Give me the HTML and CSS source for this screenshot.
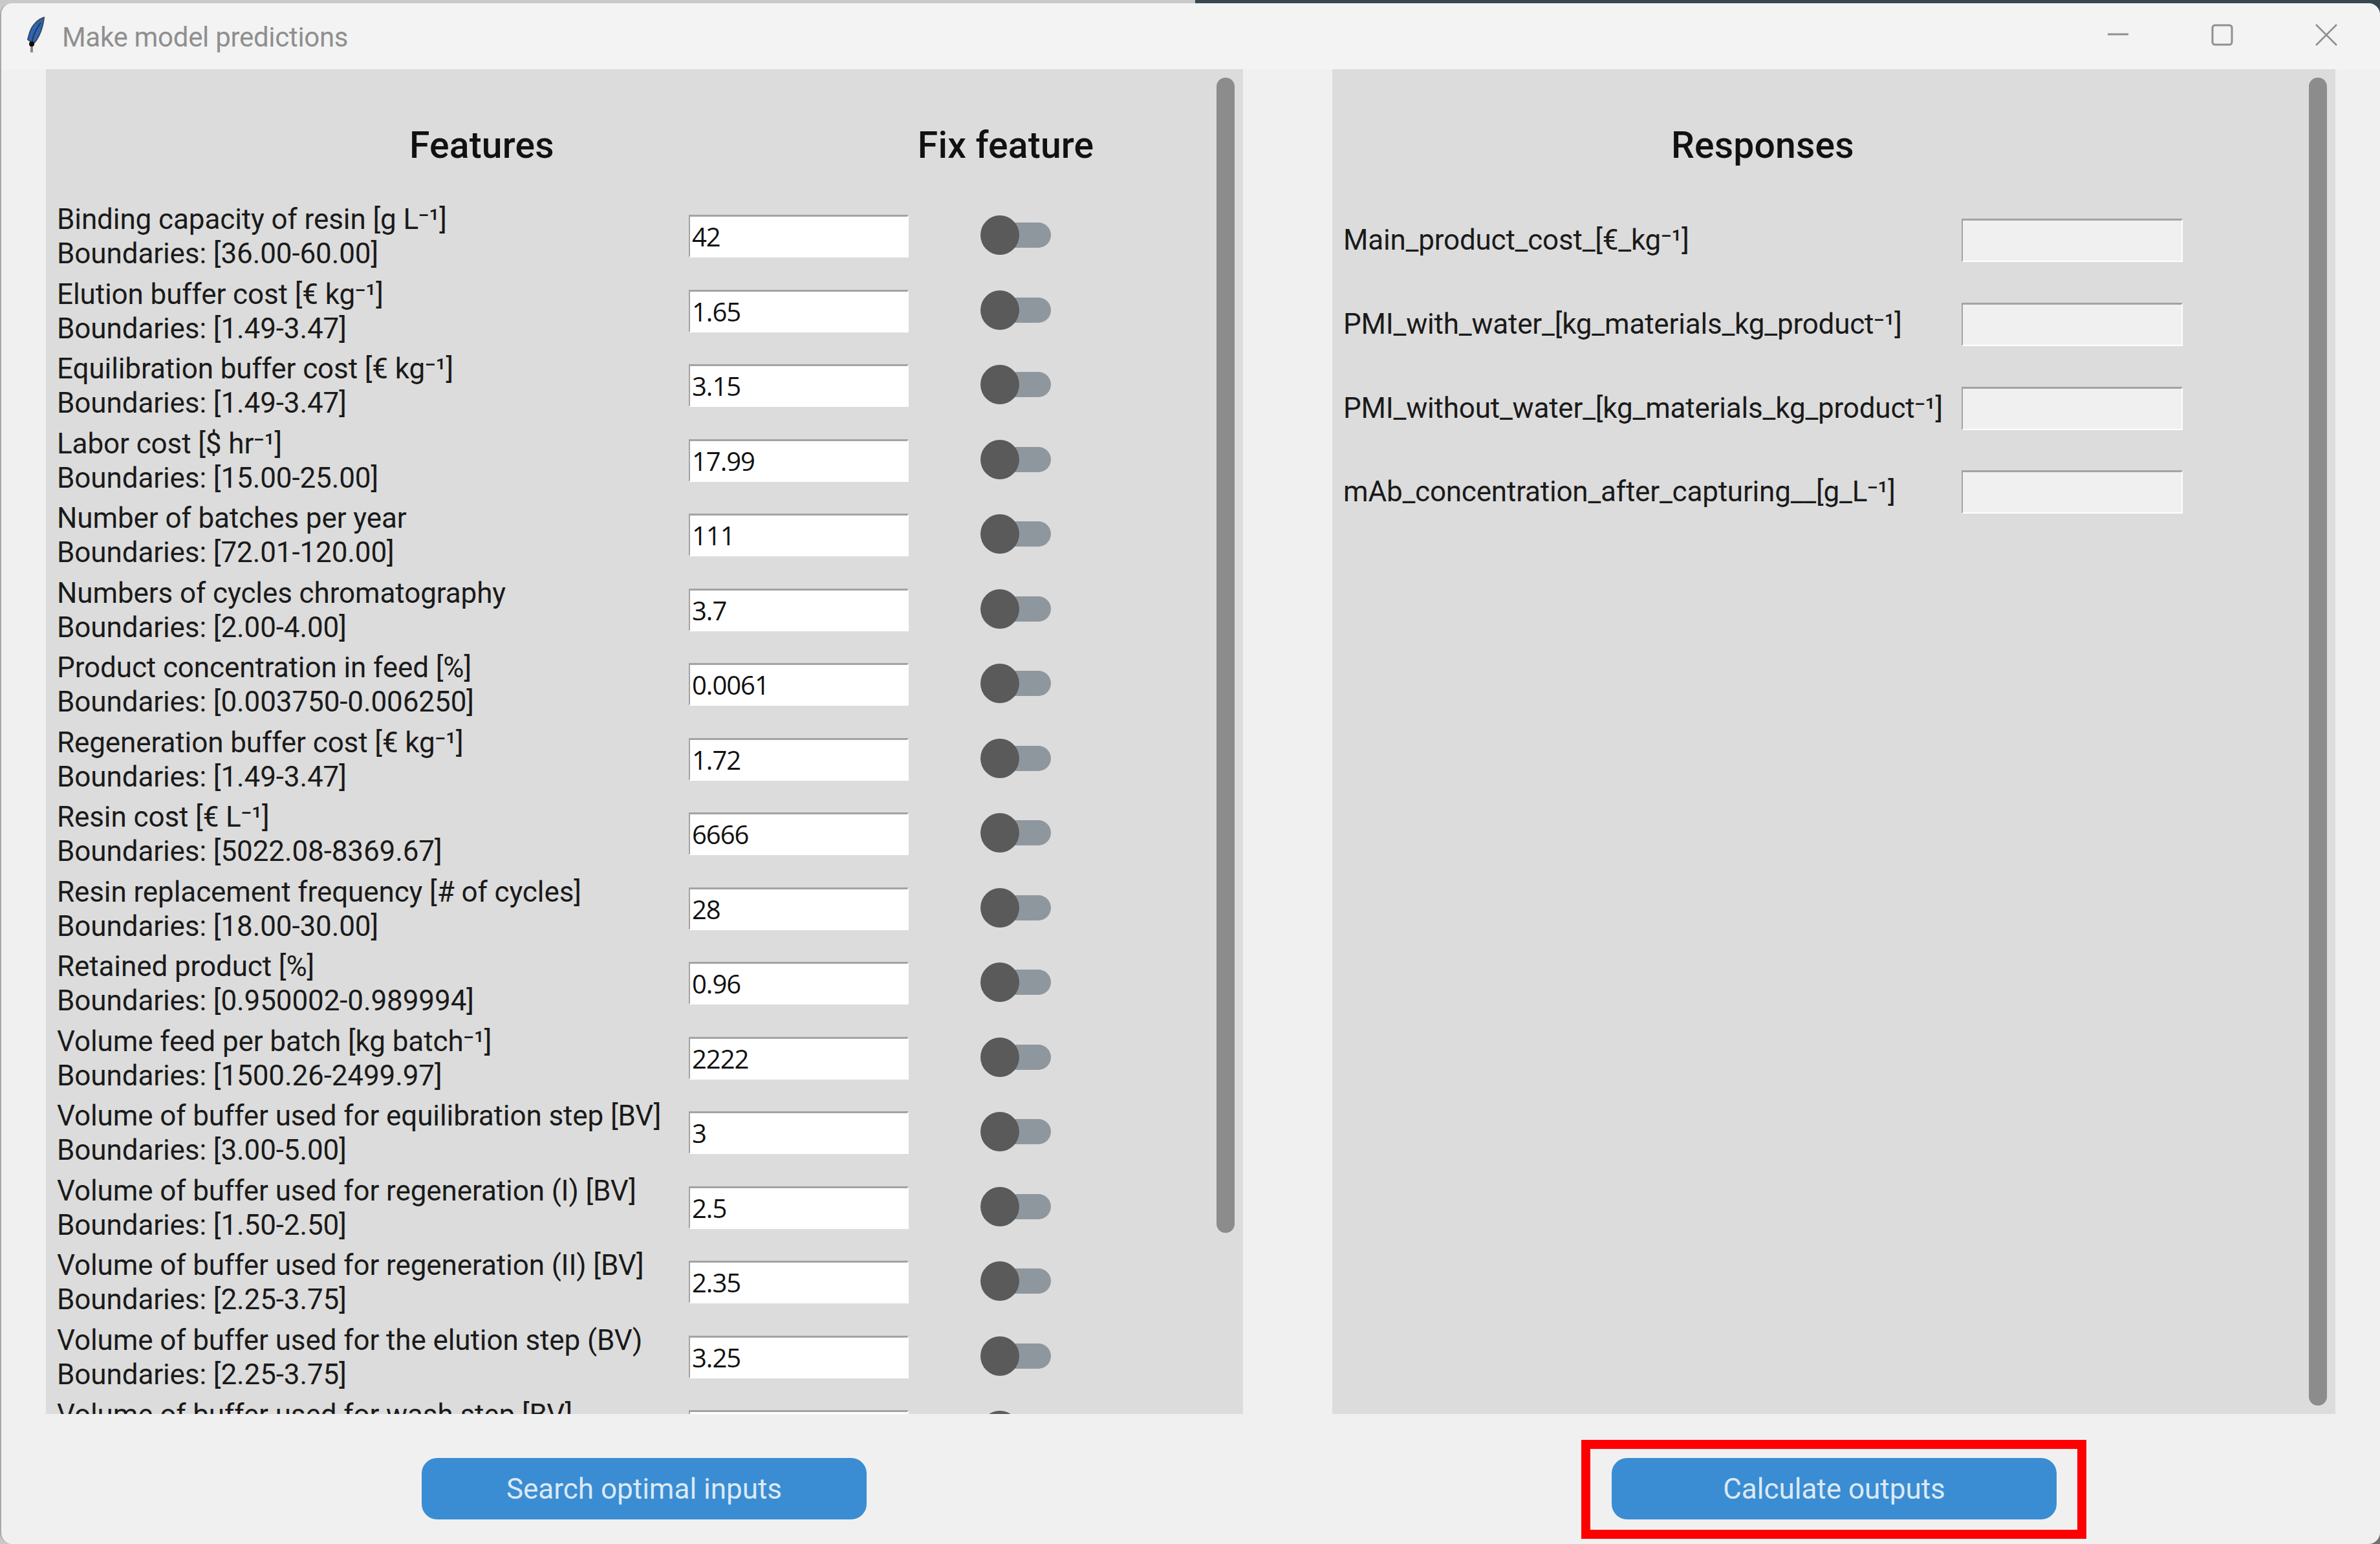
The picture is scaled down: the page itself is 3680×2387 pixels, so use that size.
FILE: index.html
```html
<!DOCTYPE html>
<html lang="en">
<head>
  <meta charset="UTF-8" />
  <title>Make model predictions</title>
  <link rel="stylesheet" href="styles.css">
</head>
<body>
  <div class="window">
    <div class="titlebar">
      <svg class="app-icon" viewBox="0 0 28 56"><path d="M7 40V55" stroke="#8a8a8a" stroke-width="4"/><path d="M26 1C17 4 8 12 4 24L1 35l4 3 2 6C15 38 24 22 26 1z" fill="#2f65b4" stroke="#3c4a5c" stroke-width="2"/><path d="M7 42C8 32 13 20 21 9" stroke="#26374f" stroke-width="2" fill="none"/><circle cx="7" cy="42" r="4" fill="#0c0c0c"/></svg>
      <span class="title">Make model predictions</span>
      <div class="controls">
        <svg class="ctl" viewBox="0 0 34 34"><path d="M1 16H33" stroke="#8f8f8f" stroke-width="3"/></svg>
        <svg class="ctl" viewBox="0 0 34 34"><rect x="2" y="2" width="30" height="30" rx="4" fill="none" stroke="#8f8f8f" stroke-width="3"/></svg>
        <svg class="ctl" viewBox="0 0 34 34"><path d="M1 1L33 33M33 1L1 33" stroke="#8f8f8f" stroke-width="2.5" fill="none"/></svg>
      </div>
    </div>

    <div class="panes">
      <div class="pane pane-features">
        <div class="heads">
          <h2 class="head-features">Features</h2>
          <h2 class="head-fix">Fix feature</h2>
        </div>
        <div class="row"><div class="label">Binding capacity of resin [g L⁻¹]<br>Boundaries: [36.00-60.00]</div><input class="field" value="42"><div class="toggle"><i></i></div></div>
        <div class="row"><div class="label">Elution buffer cost [€ kg⁻¹]<br>Boundaries: [1.49-3.47]</div><input class="field" value="1.65"><div class="toggle"><i></i></div></div>
        <div class="row"><div class="label">Equilibration buffer cost [€ kg⁻¹]<br>Boundaries: [1.49-3.47]</div><input class="field" value="3.15"><div class="toggle"><i></i></div></div>
        <div class="row"><div class="label">Labor cost [$ hr⁻¹]<br>Boundaries: [15.00-25.00]</div><input class="field" value="17.99"><div class="toggle"><i></i></div></div>
        <div class="row"><div class="label">Number of batches per year<br>Boundaries: [72.01-120.00]</div><input class="field" value="111"><div class="toggle"><i></i></div></div>
        <div class="row"><div class="label">Numbers of cycles chromatography<br>Boundaries: [2.00-4.00]</div><input class="field" value="3.7"><div class="toggle"><i></i></div></div>
        <div class="row"><div class="label">Product concentration in feed [%]<br>Boundaries: [0.003750-0.006250]</div><input class="field" value="0.0061"><div class="toggle"><i></i></div></div>
        <div class="row"><div class="label">Regeneration buffer cost [€ kg⁻¹]<br>Boundaries: [1.49-3.47]</div><input class="field" value="1.72"><div class="toggle"><i></i></div></div>
        <div class="row"><div class="label">Resin cost [€ L⁻¹]<br>Boundaries: [5022.08-8369.67]</div><input class="field" value="6666"><div class="toggle"><i></i></div></div>
        <div class="row"><div class="label">Resin replacement frequency [# of cycles]<br>Boundaries: [18.00-30.00]</div><input class="field" value="28"><div class="toggle"><i></i></div></div>
        <div class="row"><div class="label">Retained product [%]<br>Boundaries: [0.950002-0.989994]</div><input class="field" value="0.96"><div class="toggle"><i></i></div></div>
        <div class="row"><div class="label">Volume feed per batch [kg batch⁻¹]<br>Boundaries: [1500.26-2499.97]</div><input class="field" value="2222"><div class="toggle"><i></i></div></div>
        <div class="row"><div class="label">Volume of buffer used for equilibration step [BV]<br>Boundaries: [3.00-5.00]</div><input class="field" value="3"><div class="toggle"><i></i></div></div>
        <div class="row"><div class="label">Volume of buffer used for regeneration (I) [BV]<br>Boundaries: [1.50-2.50]</div><input class="field" value="2.5"><div class="toggle"><i></i></div></div>
        <div class="row"><div class="label">Volume of buffer used for regeneration (II) [BV]<br>Boundaries: [2.25-3.75]</div><input class="field" value="2.35"><div class="toggle"><i></i></div></div>
        <div class="row"><div class="label">Volume of buffer used for the elution step (BV)<br>Boundaries: [2.25-3.75]</div><input class="field" value="3.25"><div class="toggle"><i></i></div></div>
        <div class="row"><div class="label">Volume of buffer used for wash step [BV]<br>Boundaries: [2.25-3.75]</div><input class="field" value="3"><div class="toggle"><i></i></div></div>
        <div class="thumb thumb-features"></div>
      </div>

      <div class="pane pane-responses">
        <h2 class="head-responses">Responses</h2>
        <div class="resp"><div class="label">Main_product_cost_[€_kg⁻¹]</div><input class="field field-off"></div>
        <div class="resp"><div class="label">PMI_with_water_[kg_materials_kg_product⁻¹]</div><input class="field field-off"></div>
        <div class="resp"><div class="label">PMI_without_water_[kg_materials_kg_product⁻¹]</div><input class="field field-off"></div>
        <div class="resp"><div class="label">mAb_concentration_after_capturing__[g_L⁻¹]</div><input class="field field-off"></div>
        <div class="thumb thumb-responses"></div>
      </div>
    </div>

    <div class="footer">
      <div class="slot slot-left"><button class="btn">Search optimal inputs</button></div>
      <div class="slot slot-right"><div class="callout"><button class="btn">Calculate outputs</button></div></div>
    </div>
  </div>
</body>
</html>
```

FILE: styles.css
```css
html, body {
  margin: 0;
  height: 2387px;
  overflow: hidden;
  font-family: Roboto, sans-serif;
}
body {
  background:
    linear-gradient(to right, #c9c9c9 1848px, #37474f 1848px) top / 100% 40px no-repeat,
    linear-gradient(to right, #c9c9c9 1848px, #707070 1848px);
}
.window {
  box-sizing: border-box;
  height: 2382px;
  margin-top: 5px;
  background: #f0f0f0;
  border-radius: 18px;
  display: flex;
  flex-direction: column;
  border-left: 2px solid #a8a8a8;
}
.titlebar {
  height: 102px;
  flex: none;
  background: #f3f3f3;
  border-radius: 18px 18px 0 0;
  display: flex;
  align-items: center;
}
.app-icon {
  width: 28px;
  height: 56px;
  margin-left: 40px;
  margin-top: -4px;
}
.title {
  margin-left: 26px;
  font-size: 42px;
  color: #8f8f8f;
  letter-spacing: -0.3px;
  margin-top: 3px;
}
.controls {
  margin-left: auto;
  margin-right: 66px;
  display: flex;
  gap: 127px;
  margin-top: -4px;
}
.ctl { width: 34px; height: 34px; display: block; }

.panes {
  height: 2079px;
  flex: none;
  display: flex;
  padding-left: 69px;
  gap: 138px;
}
.pane {
  position: relative;
  background: #dcdcdc;
  overflow: hidden;
  box-sizing: border-box;
}
.pane-features { width: 1851px; padding-left: 17px; }
.pane-responses { width: 1551px; padding-left: 17px; }
.heads {
  height: 206px;
  display: flex;
  align-items: flex-start;
}
h2 {
  margin: 0;
  font-weight: 500;
  font-size: 57px;
  letter-spacing: 0.2px;
  color: #111;
}
.head-features { margin-left: 545px; padding-top: 84px; }
.head-fix { margin-left: 562px; padding-top: 84px; }
.head-responses { padding-top: 84px; margin-left: 507px; height: 200px; box-sizing: border-box; }
.row {
  height: 115.5px;
  display: flex;
  align-items: flex-start;
}
.label {
  width: 977px;
  font-size: 44px;
  line-height: 53px;
  color: #1a1a1a;
  letter-spacing: -0.1px;
  white-space: nowrap;
}
.field {
  box-sizing: border-box;
  width: 340px;
  height: 66px;
  padding: 0 0 0 3px;
  border: 2px solid #fff;
  border-top: 3px solid #a3a3a3;
  border-left: 2px solid #a3a3a3;
  background: #fff;
  font-family: "Open Sans", sans-serif;
  font-size: 40px;
  color: #111;
  letter-spacing: -1px;
  margin-top: 19px;
}
.toggle {
  position: relative;
  width: 109px;
  height: 61px;
  margin-left: 111px;
  margin-top: 20px;
}
.toggle::before {
  content: "";
  position: absolute;
  left: 30px;
  right: 0;
  top: 11px;
  height: 39px;
  border-radius: 20px;
  background: #8f979e;
}
.toggle i {
  position: absolute;
  left: 0;
  top: 0;
  width: 60px;
  height: 61px;
  border-radius: 50%;
  background: #5a5a5a;
}
.resp {
  height: 129.7px;
  display: flex;
  align-items: center;
}
.resp .label { width: 956px; letter-spacing: -0.2px; }
.field-off { background: #f0f0f0; width: 342px; height: 67px; margin-top: 0; }

.thumb {
  position: absolute;
  width: 28px;
  top: 13px;
  border-radius: 14px;
  background: #8c8c8c;
}
.thumb-features { right: 13px; height: 1786px; }
.thumb-responses { right: 13px; height: 2053px; }

.footer {
  flex: 1;
  display: grid;
  grid-template-columns: 2059px 1fr;
}
.slot { padding-top: 40px; box-sizing: border-box; }
.slot-left { padding-left: 650px; padding-top: 68px; }
.slot-right { padding-left: 384px; }
.btn {
  display: block;
  width: 688px;
  height: 95px;
  border: none;
  border-radius: 24px;
  background: #3a8dd2;
  color: #dce9f5;
  font-family: Roboto, sans-serif;
  font-size: 44px;
}
.callout {
  box-sizing: border-box;
  width: 781px;
  height: 153px;
  border: 14px solid #ff0000;
  padding: 14px 0 0 33px;
}
```
